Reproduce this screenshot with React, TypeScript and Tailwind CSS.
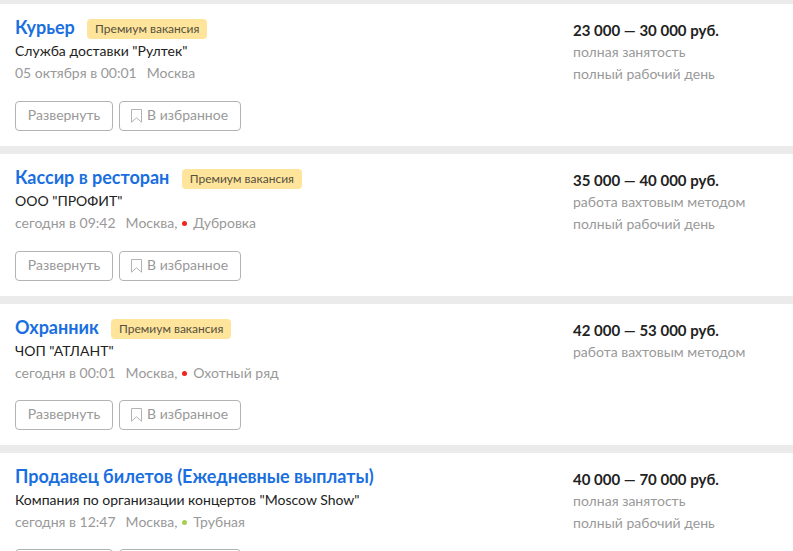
import React from "react";

type Job = {
  title: string;
  premium?: boolean;
  company: string;
  date: string;
  city: string;
  metro?: string;
  metroColor?: string;
  salary: string;
  lines: string[];
  box: string;
  actions: string;
};

const jobs: Job[] = [
  { title: "Курьер", premium: true, company: 'Служба доставки "Рултек"', date: "05 октября в 00:01", city: "Москва", salary: "23 000 — 30 000 руб.", lines: ["полная занятость", "полный рабочий день"], box: "h-[142px] mb-[8px]", actions: "mt-[18px]" },
  { title: "Кассир в ресторан", premium: true, company: 'ООО "ПРОФИТ"', date: "сегодня в 09:42", city: "Москва,", metro: "Дубровка", metroColor: "bg-[#f0241e]", salary: "35 000 — 40 000 руб.", lines: ["работа вахтовым методом", "полный рабочий день"], box: "h-[142px] mb-[8px]", actions: "mt-[18px]" },
  { title: "Охранник", premium: true, company: 'ЧОП "АТЛАНТ"', date: "сегодня в 00:01", city: "Москва,", metro: "Охотный ряд", metroColor: "bg-[#f0241e]", salary: "42 000 — 53 000 руб.", lines: ["работа вахтовым методом"], box: "h-[141px] mb-[8px]", actions: "mt-[17px]" },
  { title: "Продавец билетов (Ежедневные выплаты)", company: 'Компания по организации концертов "Moscow Show"', date: "сегодня в 12:47", city: "Москва,", metro: "Трубная", metroColor: "bg-[#a5cf4f]", salary: "40 000 — 70 000 руб.", lines: ["полная занятость", "полный рабочий день"], box: "h-[142px]", actions: "mt-[17px]" },
];

function Card({ job }: { job: Job }) {
  return (
    <div className={`bg-white shrink-0 flex pl-[15px] pt-[13px] ${job.box}`}>
      <div className="w-[558px] shrink-0">
        <div className="flex items-center h-[22px] gap-[12.4px]">
          <span className="text-[18px] leading-[22px] font-bold tracking-[-0.02px] text-[#1a6fe0] mb-[2px]">{job.title}</span>
          {job.premium && (
            <span className="h-[20px] mt-[2px] px-[8px] rounded-[4px] bg-[#ffe49c] text-[12px] leading-[20px] text-[#55503c]">Премиум вакансия</span>
          )}
        </div>
        <div className="text-[14px] leading-[20px] mt-[2px] text-[#222222]">{job.company}</div>
        <div className="text-[14px] leading-[20px] mt-[2px] text-[#999999] flex items-center">
          <span className="mr-[10px]">{job.date}</span>
          <span>{job.city}</span>
          {job.metro && (
            <>
              <span className={`w-[5px] h-[5px] rounded-full ml-[5px] mr-[6px] ${job.metroColor}`} />
              <span>{job.metro}</span>
            </>
          )}
        </div>
        <div className={`flex gap-[6px] ${job.actions}`}>
          <button className="h-[30px] w-[98px] border border-[#b3b3b3] rounded-[4px] text-[14px] text-[#999999] flex items-center justify-center pb-[3px]">Развернуть</button>
          <button className="h-[30px] w-[122px] border border-[#b3b3b3] rounded-[4px] text-[14px] text-[#999999] flex items-center pl-[11px] pb-[3px]">
            <svg width="11" height="14" viewBox="0 0 11 14" fill="none" className="mr-[5px] mt-[3px]">
              <path d="M0.5 0.5H10.5V13.2L5.5 8.8L0.5 13.2V0.5Z" stroke="#b3b3b3" />
            </svg>
            В избранное
          </button>
        </div>
      </div>
      <div className="flex-1">
        <div className="text-[15px] leading-[22px] font-bold text-[#222222] mt-[2px]">{job.salary}</div>
        {job.lines.map((l) => (
          <div key={l} className="text-[14px] leading-[22px] text-[#999999]">{l}</div>
        ))}
      </div>
    </div>
  );
}

export default function App() {
  return (
    <div className="w-[793px] h-[551px] overflow-hidden bg-[#ebebeb] pt-[4px] flex flex-col [font-family:Lato,'Noto_Sans',sans-serif]">
      {jobs.map((j) => (
        <Card key={j.title} job={j} />
      ))}
    </div>
  );
}
